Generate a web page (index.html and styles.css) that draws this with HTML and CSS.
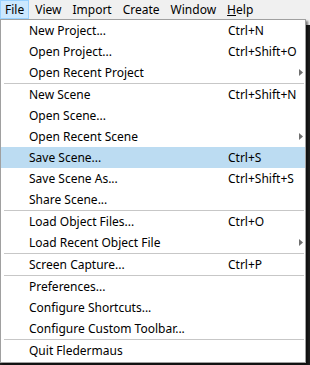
FILE: index.html
```html
<!DOCTYPE html>
<html lang="en">
<head>
    <meta charset="UTF-8">
    <meta name="viewport" content="width=device-width, initial-scale=1.0">
    <title>Fledermaus - File</title>
    <link rel="stylesheet" href="styles.css">
</head>
<body>
    <div class="menubar">
        <div class="menubar-item active">File</div>
        <div class="menubar-item">View</div>
        <div class="menubar-item">Import</div>
        <div class="menubar-item">Create</div>
        <div class="menubar-item">Window</div>
        <div class="menubar-item"><u>H</u>elp</div>
    </div>

    <div class="workspace">
        <div class="menu">
            <div class="item"><span class="label">New Project...</span><span class="shortcut">Ctrl+N</span></div>
            <div class="item"><span class="label">Open Project...</span><span class="shortcut">Ctrl+Shift+O</span></div>
            <div class="item"><span class="label">Open Recent Project</span><span class="sub"><svg width="4" height="7" viewBox="0 0 4 7"><path d="M0 0L4 3.5L0 7Z" fill="#6f6f6f"/></svg></span></div>
            <div class="sep"></div>
            <div class="item"><span class="label">New Scene</span><span class="shortcut">Ctrl+Shift+N</span></div>
            <div class="item"><span class="label">Open Scene...</span></div>
            <div class="item"><span class="label">Open Recent Scene</span><span class="sub"><svg width="4" height="7" viewBox="0 0 4 7"><path d="M0 0L4 3.5L0 7Z" fill="#6f6f6f"/></svg></span></div>
            <div class="item hover"><span class="label">Save Scene...</span><span class="shortcut">Ctrl+S</span></div>
            <div class="item"><span class="label">Save Scene As...</span><span class="shortcut">Ctrl+Shift+S</span></div>
            <div class="item"><span class="label">Share Scene...</span></div>
            <div class="sep"></div>
            <div class="item"><span class="label">Load Object Files...</span><span class="shortcut">Ctrl+O</span></div>
            <div class="item"><span class="label">Load Recent Object File</span><span class="sub"><svg width="4" height="7" viewBox="0 0 4 7"><path d="M0 0L4 3.5L0 7Z" fill="#6f6f6f"/></svg></span></div>
            <div class="sep"></div>
            <div class="item"><span class="label">Screen Capture...</span><span class="shortcut">Ctrl+P</span></div>
            <div class="sep"></div>
            <div class="item"><span class="label">Preferences...</span></div>
            <div class="item"><span class="label">Configure Shortcuts...</span></div>
            <div class="item"><span class="label">Configure Custom Toolbar...</span></div>
            <div class="sep"></div>
            <div class="item"><span class="label">Quit Fledermaus</span></div>
        </div>
    </div>
</body>
</html>
```

FILE: styles.css
```css
body {
    margin: 0;
    width: 310px;
    height: 365px;
    overflow: hidden;
    display: flex;
    flex-direction: column;
    background: #1e1e1e;
    color: #000;
    font-family: "Segoe UI", "Noto Sans", sans-serif;
    font-size: 12px;
}
.menubar {
    height: 19px;
    background: #f0f0f0;
    display: flex;
    gap: 1px;
}
.menubar-item {
    height: 17px;
    line-height: 17px;
    padding: 0 4px;
    border: 1px solid transparent;
}
.menubar-item.active {
    background: #cce8ff;
    border-color: #99d1ff;
}
.menubar-item u {
    text-underline-offset: 1px;
}
.workspace {
    flex: 1;
    background: linear-gradient(#f0f0f0 6px, #1e1e1e 6px);
}
.menu {
    width: 306px;
    box-sizing: border-box;
    background: #fff;
    border: 1px solid #a0a0a0;
    padding-bottom: 1px;
    box-shadow: 2px 2px 2px rgba(0, 0, 0, 0.5);
}
.item {
    display: grid;
    grid-template-columns: 1fr 67px 10px;
    align-items: center;
    height: 21px;
    padding-left: 28px;
    white-space: nowrap;
}
.item.hover {
    background: #bcdcf2;
}
.label {
    grid-column: 1;
}
.shortcut {
    grid-column: 2;
}
.sub {
    grid-column: 3;
    display: flex;
    padding-left: 4px;
}
.sep {
    height: 1px;
    background: #c7c7c7;
    margin: 0 1px 0 3px;
}
```
